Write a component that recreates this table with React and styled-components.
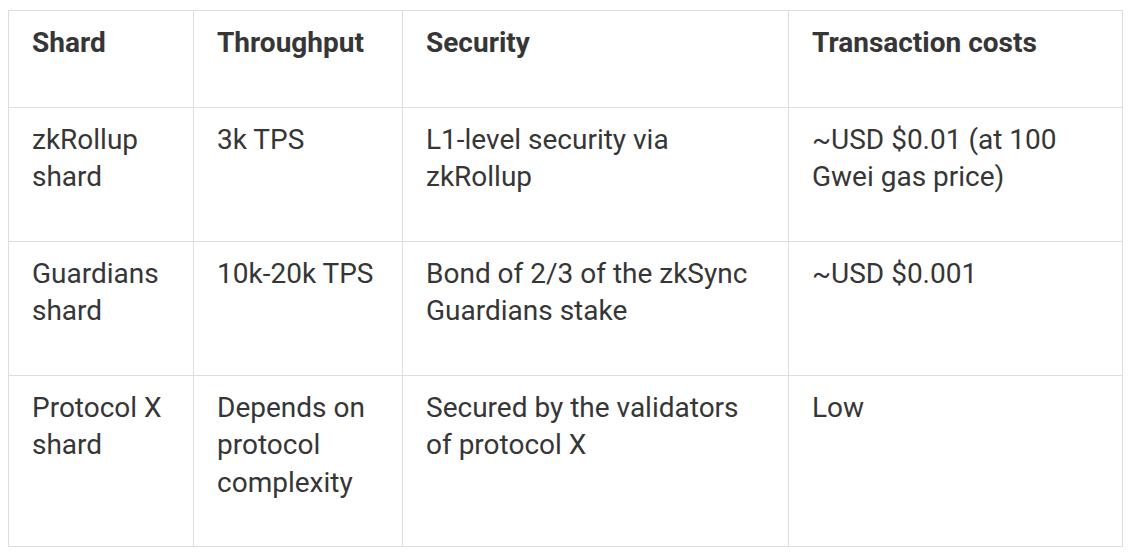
import React from "react";
import styled, { createGlobalStyle } from "styled-components";

const GlobalStyle = createGlobalStyle`
  body {
    margin: 0;
    background: #ffffff;
    font-family: Roboto, "Liberation Sans", sans-serif;
  }
`;

const columns = [
  { key: "shard", label: "Shard", width: 185 },
  { key: "throughput", label: "Throughput", width: 209 },
  { key: "security", label: "Security", width: 386 },
  { key: "cost", label: "Transaction costs", width: 334 },
];

const rows = [
  {
    shard: "zkRollup shard",
    throughput: "3k TPS",
    security: "L1-level security via zkRollup",
    cost: "~USD $0.01 (at 100 Gwei gas price)",
  },
  {
    shard: "Guardians shard",
    throughput: "10k-20k TPS",
    security: "Bond of 2/3 of the zkSync Guardians stake",
    cost: "~USD $0.001",
  },
  {
    shard: "Protocol X shard",
    throughput: "Depends on protocol complexity",
    security: "Secured by the validators of protocol X",
    cost: "Low",
  },
];

const App = () => {
  return (
    <Page>
      <GlobalStyle />
      <Table>
        <colgroup>
          {columns.map((c) => (
            <col key={c.key} style={{ width: c.width }} />
          ))}
        </colgroup>
        <thead>
          <tr>
            {columns.map((c) => (
              <HeadCell key={c.key}>{c.label}</HeadCell>
            ))}
          </tr>
        </thead>
        <tbody>
          {rows.map((r) => (
            <tr key={r.shard}>
              {columns.map((c) => (
                <Cell key={c.key}>{r[c.key]}</Cell>
              ))}
            </tr>
          ))}
        </tbody>
      </Table>
    </Page>
  );
};
export default App;

const Page = styled.div`
  padding: 10px 8px;
`;

const Table = styled.table`
  width: 1114px;
  table-layout: fixed;
  border-collapse: collapse;
  color: #363636;
`;

const Cell = styled.td`
  border: 1.5px solid #dedede;
  padding: 13px 22px 45px 23px;
  vertical-align: top;
  font-size: 28px;
  line-height: 37.5px;
  font-weight: 400;
  text-align: left;
`;

const HeadCell = styled(Cell).attrs({ as: "th" })`
  font-weight: 700;
`;
